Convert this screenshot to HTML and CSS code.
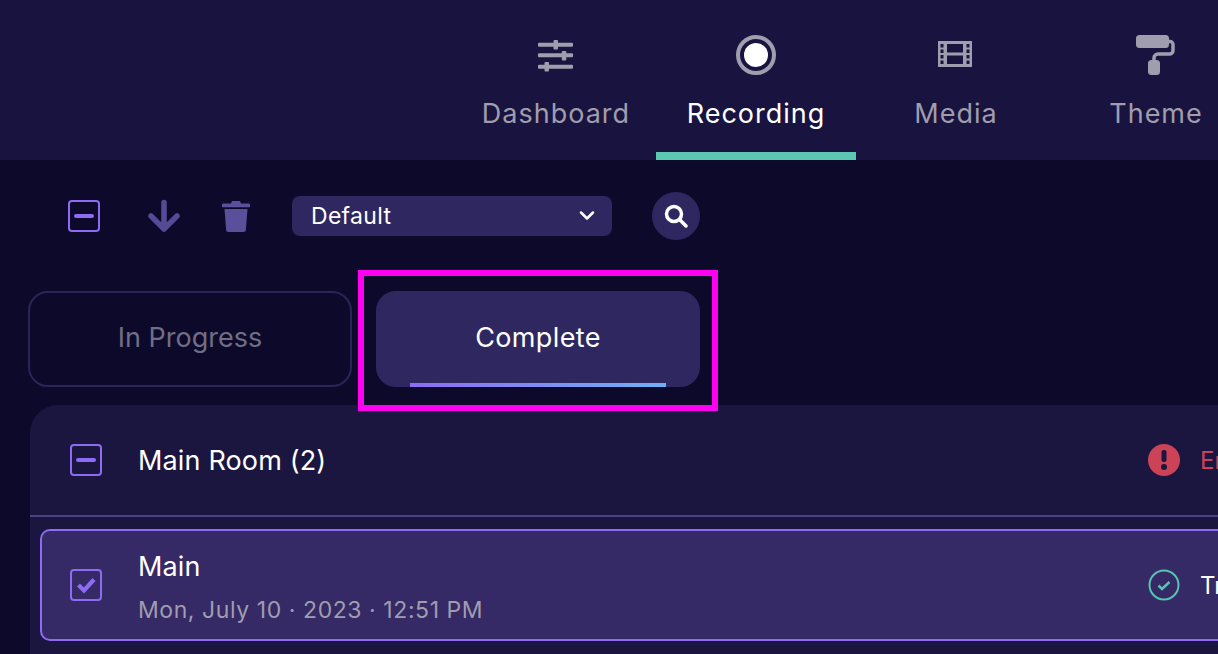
FILE: index.html
```html
<!DOCTYPE html>
<html lang="en">
  <head>
    <meta charset="UTF-8" />
    <title>Recording</title>
    <link rel="stylesheet" href="styles.css">
  </head>
  <body>
    <header class="topbar">
      <nav class="nav">
        <a class="nav-item">
          <svg class="nav-icon" viewBox="0 0 40 40">
            <g fill="#a09dae">
              <rect x="2" y="8.700" width="35" height="4" rx="1"/>
              <rect x="2" y="19.300" width="35" height="4" rx="1"/>
              <rect x="2" y="30.700" width="35" height="4" rx="1"/>
              <rect x="17.500" y="6" width="4.500" height="9.500" rx="1"/>
              <rect x="25.800" y="17" width="4.500" height="9.500" rx="1"/>
              <rect x="8.500" y="28" width="4.500" height="9.500" rx="1"/>
            </g>
          </svg>
          <span>Dashboard</span>
        </a>
        <a class="nav-item active">
          <svg class="nav-icon" viewBox="0 0 40 40">
            <circle cx="20" cy="21" r="18" fill="none" stroke="#a09dae" stroke-width="4"/>
            <circle cx="20" cy="21" r="12" fill="#fff"/>
          </svg>
          <span>Recording</span>
        </a>
        <a class="nav-item">
          <svg class="nav-icon" viewBox="0 0 40 40">
            <path fill="#a09dae" fill-rule="evenodd" d="M2 7h34v26H2zM4.500 10v3.500h3V10zM4.500 15.500v3.500h3v-3.500zM4.500 21v3.500h3V21zM4.500 26.500V30h3v-3.500zM30.500 10v3.500h3V10zM30.500 15.500v3.500h3v-3.500zM30.500 21v3.500h3V21zM30.500 26.500V30h3v-3.500zM11 10v8.500h16V10zM11 21.500V30h16v-8.500z"/>
          </svg>
          <span>Media</span>
        </a>
        <a class="nav-item">
          <svg class="nav-icon" viewBox="0 0 40 40">
            <rect x="0" y="1" width="33" height="13" rx="3.500" fill="#a09dae"/>
            <path fill="none" stroke="#a09dae" stroke-width="3.500" d="M33 7.500h1a3 3 0 0 1 3 3v6a3.500 3.500 0 0 1-3.500 3.500H22a4 4 0 0 0-4 4v4"/>
            <rect x="12" y="26" width="12" height="15" rx="3.500" fill="#a09dae"/>
          </svg>
          <span>Theme</span>
        </a>
      </nav>
    </header>

    <div class="toolbar">
      <span class="checkbox"><i class="dash"></i></span>
      <svg class="tool-arrow" viewBox="0 0 34 34">
        <path fill="none" stroke="#544b96" stroke-width="5.500" stroke-linecap="round" stroke-linejoin="round" d="M17 3.500V29M4 17l13 13 13-13"/>
      </svg>
      <svg class="tool-trash" viewBox="0 0 28 32">
        <path fill="#5a4f9b" d="M10 1h8l1 2.500h7.500a1.800 1.800 0 0 1 0 3.800H1.500a1.800 1.800 0 0 1 0-3.800H9zM2.500 9h23l-1.600 20.500a2.500 2.500 0 0 1-2.500 2.500H6.600a2.500 2.500 0 0 1-2.500-2.500z"/>
      </svg>
      <div class="select">
        <span>Default</span>
        <svg class="chevron" viewBox="0 0 16 12">
          <path fill="none" stroke="#fff" stroke-width="2.500" stroke-linecap="round" stroke-linejoin="round" d="M2 2.500l6 6 6-6"/>
        </svg>
      </div>
      <span class="search">
        <svg viewBox="0 0 24 24">
          <circle cx="10" cy="10" r="7.500" fill="none" stroke="#fff" stroke-width="3.500"/>
          <path stroke="#fff" stroke-width="3.500" stroke-linecap="round" d="M16 16l6 6"/>
        </svg>
      </span>
    </div>

    <div class="tabs">
      <div class="tab">In Progress</div>
      <div class="tab selected">Complete</div>
    </div>
    <div class="highlight"></div>

    <section class="panel">
      <div class="group-row">
        <span class="checkbox"><i class="dash"></i></span>
        <span class="group-name">Main Room (2)</span>
        <div class="status">
          <svg class="status-icon" viewBox="0 0 32 32">
            <circle cx="16" cy="16" r="16" fill="#cc4257"/>
            <rect x="13.500" y="6" width="5" height="12" rx="2" fill="#1a1640"/>
            <circle cx="16" cy="23" r="3" fill="#1a1640"/>
          </svg>
          <span class="status-error">Error</span>
        </div>
      </div>
      <div class="item-row">
        <span class="checkbox"><svg viewBox="0 0 24 24"><path fill="none" stroke="#8d6bf2" stroke-width="4.200" d="M4.500 12l5.500 5.500L20 6.500"/></svg></span>
        <div class="item-text">
          <div class="item-name">Main</div>
          <div class="item-date">Mon, July 10 · 2023 · 12:51 PM</div>
        </div>
        <div class="status">
          <svg class="status-icon" viewBox="0 0 32 32">
            <circle cx="16" cy="16" r="14.500" fill="none" stroke="#57c5b0" stroke-width="2"/>
            <path fill="none" stroke="#57c5b0" stroke-width="2.500" d="M10.500 16.500l3.500 3.500 7.500-7"/>
          </svg>
          <span>Transferred</span>
        </div>
      </div>
    </section>
  </body>
</html>
```

FILE: styles.css
```css
* {
  margin: 0;
  padding: 0;
  box-sizing: border-box;
}

html,
body {
  height: 100%;
  overflow: hidden;
}

body {
  position: relative;
  background: #0c092b;
  color: #fff;
  font-family: Inter, "Noto Sans", sans-serif;
}

.topbar {
  height: 160px;
  background: #18143f;
  padding-left: 456px;
}

.nav {
  display: flex;
  width: 800px;
}

.nav-item {
  flex: 0 0 200px;
  height: 160px;
  padding-top: 34px;
  display: flex;
  flex-direction: column;
  align-items: center;
  font-size: 27px;
  letter-spacing: 1px;
  color: #a09dae;
}

.nav-item.active {
  color: #fff;
  border-bottom: 8px solid #5bc8b3;
}

.nav-icon {
  width: 40px;
  height: 40px;
  margin-bottom: 23px;
  overflow: visible;
}

.toolbar {
  height: 111px;
  padding-left: 68px;
  display: flex;
  align-items: center;
}

.checkbox {
  flex: none;
  width: 32px;
  height: 32px;
  border: 2px solid #8d6bf2;
  border-radius: 4px;
  display: flex;
  align-items: center;
  justify-content: center;
}

.checkbox svg {
  width: 24px;
  height: 24px;
}

.dash {
  width: 20px;
  height: 4px;
  border-radius: 2px;
  background: #8d6bf2;
}

.tool-arrow {
  width: 34px;
  height: 34px;
  margin-left: 47px;
}

.tool-trash {
  width: 28px;
  height: 32px;
  margin-left: 41px;
}

.select {
  width: 320px;
  height: 40px;
  margin-left: 42px;
  padding: 1px 17px 0 19px;
  background: #2f2760;
  border-radius: 8px;
  display: flex;
  align-items: center;
  justify-content: space-between;
  font-size: 23px;
  letter-spacing: 0.3px;
}

.chevron {
  width: 16px;
  height: 12px;
}

.search {
  width: 48px;
  height: 48px;
  margin-left: 40px;
  border-radius: 50%;
  background: #2f2760;
  display: flex;
  align-items: center;
  justify-content: center;
}

.search svg {
  width: 24px;
  height: 24px;
}

.tabs {
  display: flex;
  gap: 24px;
  padding: 20px 0 0 28px;
}

.tab {
  position: relative;
  width: 324px;
  height: 96px;
  padding-bottom: 4px;
  border: 2px solid #2b2459;
  border-radius: 20px;
  display: flex;
  align-items: center;
  justify-content: center;
  font-size: 27px;
  color: #716e84;
}

.tab.selected {
  background: #2f2760;
  border-color: #2f2760;
  color: #fff;
  letter-spacing: 0.35px;
}

.tab.selected::after {
  content: "";
  position: absolute;
  left: 32px;
  right: 32px;
  bottom: -2px;
  height: 4px;
  background: linear-gradient(90deg, #8d6bf2, #6fb0f5);
}

.highlight {
  position: absolute;
  left: 358px;
  top: 270px;
  width: 360px;
  height: 141px;
  border: 6px solid #ff00f0;
}

.panel {
  margin: 18px 0 0 30px;
  width: 1220px;
  height: 260px;
  background: #1a1640;
  border-radius: 28px 0 0 0;
}

.group-row {
  height: 112px;
  padding-left: 40px;
  display: flex;
  align-items: center;
  border-bottom: 2px solid #4b4285;
}

.group-name {
  margin-left: 36px;
  font-size: 27px;
  letter-spacing: 0.15px;
}

.status {
  display: flex;
  align-items: center;
  gap: 20px;
  margin-left: auto;
  width: 102px;
  flex: none;
  font-size: 24px;
  white-space: nowrap;
}

.status-icon {
  width: 32px;
  height: 32px;
  flex: none;
}

.status-error {
  color: #cc4257;
}

.item-row {
  margin: 12px 0 0 10px;
  height: 112px;
  padding-left: 28px;
  display: flex;
  align-items: center;
  background: #352966;
  border: 2px solid #8d6bf2;
  border-right: 0;
  border-radius: 10px 0 0 10px;
}

.item-text {
  margin-left: 36px;
  padding-top: 3px;
}

.item-name {
  font-size: 27px;
  letter-spacing: 0.15px;
  margin-bottom: 13px;
}

.item-date {
  font-size: 23px;
  letter-spacing: 0.57px;
  color: #a09dae;
}
```
